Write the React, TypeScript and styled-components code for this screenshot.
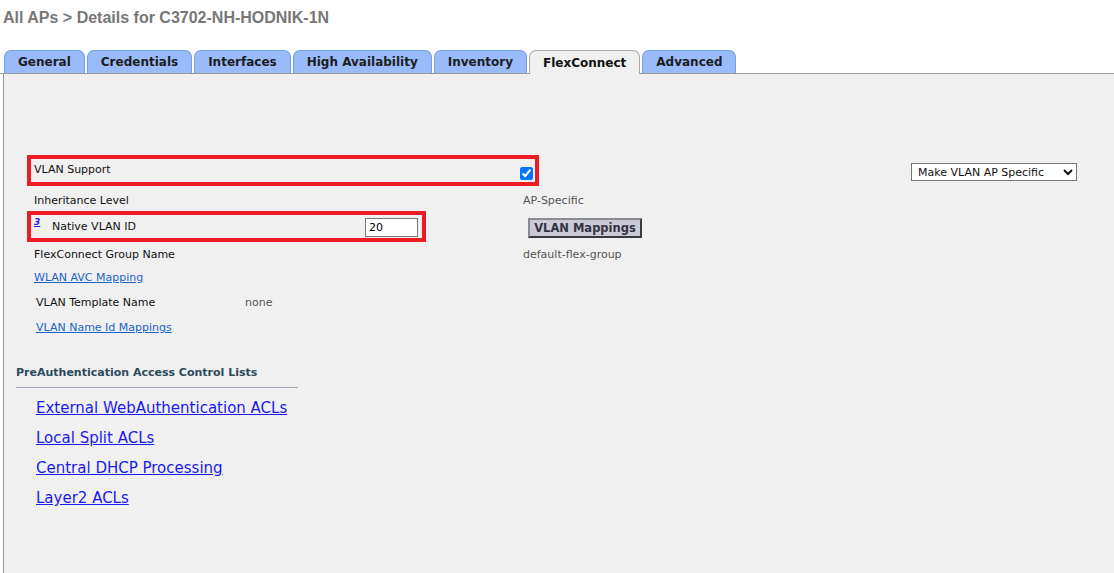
import React from "react";
import styled, { createGlobalStyle } from "styled-components";

const Global = createGlobalStyle`
  html, body { margin: 0; padding: 0; background: #ffffff; }
  body { font-family: "DejaVu Sans", Verdana, sans-serif; }
`;

const Page = styled.div`
  width: 1114px;
  height: 573px;
  display: flex;
  flex-direction: column;
  overflow: hidden;
`;

const Title = styled.h1`
  margin: 0;
  padding: 9px 0 0 3px;
  height: 41px;
  box-sizing: border-box;
  font-family: "Liberation Sans", Arial, sans-serif;
  font-weight: bold;
  font-size: 16px;
  color: #777777;
`;

const TabBar = styled.div`
  display: flex;
  align-items: flex-end;
  gap: 2px;
  padding: 9px 0 0 4px;
  height: 33px;
  box-sizing: border-box;
  border-bottom: 1px solid #999999;
`;

const Tab = styled.div<{ $active?: boolean }>`
  box-sizing: border-box;
  padding: 0 13px;
  display: flex;
  align-items: center;
  border: 1px solid ${(p) => (p.$active ? "#a8a8a8" : "#72a0e4")};
  border-bottom: none;
  border-radius: 7px 7px 0 0;
  background: ${(p) => (p.$active ? "#f0f0f0" : "#99bbfa")};
  font-weight: bold;
  font-size: 12px;
  color: ${(p) => (p.$active ? "#111111" : "#1d1d1d")};
  margin-bottom: ${(p) => (p.$active ? "-1px" : "0")};
  height: ${(p) => (p.$active ? "24px" : "23px")};
`;

const Panel = styled.div`
  flex: 1;
  margin-left: 3px;
  border-left: 1px solid #9a9a9a;
  background: #f0f0f0;
  padding: 81px 0 0 23px;
  display: flex;
  flex-direction: column;
  font-size: 11px;
  color: #111111;
`;

const Line = styled.div<{ $h: number; $shift?: number }>`
  display: flex;
  align-items: center;
  box-sizing: border-box;
  height: ${(p) => p.$h}px;
  padding-top: ${(p) => p.$shift ?? 0}px;
`;

const RedBox = styled.div<{ $w: number }>`
  width: ${(p) => p.$w}px;
  height: 31px;
  box-sizing: border-box;
  border: 4px solid #ed1c24;
  display: flex;
  align-items: center;
  padding: 0 2px 0 3px;
`;

const Label = styled.span<{ $w?: number; $pad?: number; $up?: number }>`
  display: inline-block;
  box-sizing: border-box;
  width: ${(p) => (p.$w ? `${p.$w}px` : "auto")};
  padding-left: ${(p) => p.$pad ?? 0}px;
  margin-bottom: ${(p) => (p.$up ?? 0) * 2}px;
  flex-shrink: 0;
`;

const Value = styled.span`
  color: #555555;
`;

const Check = styled.input`
  margin: 6px 0 0 auto;
  width: 13px;
  height: 13px;
`;

const Select = styled.select`
  margin-left: 372px;
  margin-top: 3px;
  width: 166px;
  height: 18px;
  font-family: "DejaVu Sans", Verdana, sans-serif;
  font-size: 11px;
  background: #ffffff;
  border: 1px solid #767676;
  padding: 0 2px;
  color: #111;
`;

const Sup = styled.a`
  align-self: flex-start;
  margin-top: 2px;
  font-size: 9px;
  font-weight: bold;
  font-style: italic;
  color: #1a1aee;
  text-decoration: underline;
  width: 18px;
`;

const TextInput = styled.input`
  margin-left: auto;
  width: 53px;
  height: 19px;
  box-sizing: border-box;
  border: 1px solid #767676;
  font-family: "DejaVu Sans", Verdana, sans-serif;
  font-size: 11px;
  padding: 0 3px;
  margin-right: 2px;
  margin-top: 2px;
`;

const Button = styled.button`
  margin-left: 102px;
  margin-top: 2px;
  width: 114px;
  height: 20px;
  box-sizing: border-box;
  background: #c9cad3;
  border: 2px solid;
  border-color: #8a8a94 #3a3a44 #3a3a44 #8a8a94;
  font-family: "DejaVu Sans", Verdana, sans-serif;
  font-weight: bold;
  font-size: 11.5px;
  color: #333344;
  padding: 0;
`;

const SmallLink = styled.a<{ $pad: number }>`
  margin-left: ${(p) => p.$pad}px;
  color: #1c63c9;
  text-decoration: underline;
  font-size: 11px;
`;

const Section = styled.div`
  margin: 26px 0 0 -11px;
  width: 282px;
  border-bottom: 1px solid #9aa3b0;
  padding-bottom: 8px;
  font-weight: bold;
  font-size: 11px;
  color: #2b4a5c;
`;

const AclList = styled.div`
  display: flex;
  flex-direction: column;
  padding: 5px 0 0 9px;
`;

const AclLink = styled.a`
  height: 30px;
  display: flex;
  align-items: center;
  font-size: 15px;
  color: #1a1aee;
  text-decoration: underline;
`;

const tabs = [
  "General",
  "Credentials",
  "Interfaces",
  "High Availability",
  "Inventory",
  "FlexConnect",
  "Advanced",
];

const acls = [
  "External WebAuthentication ACLs",
  "Local Split ACLs",
  "Central DHCP Processing",
  "Layer2 ACLs",
];

export default function App() {
  return (
    <Page>
      <Global />
      <Title>All APs &gt; Details for C3702-NH-HODNIK-1N</Title>
      <TabBar>
        {tabs.map((t) => (
          <Tab key={t} $active={t === "FlexConnect"}>
            {t}
          </Tab>
        ))}
      </TabBar>
      <Panel>
        <Line $h={31}>
          <RedBox $w={512}>
            <Label $up={1}>VLAN Support</Label>
            <Check type="checkbox" defaultChecked />
          </RedBox>
          <Select defaultValue="ap">
            <option value="ap">Make VLAN AP Specific</option>
          </Select>
        </Line>
        <Line $h={25} $shift={3}>
          <Label $w={496} $pad={7}>
            Inheritance Level
          </Label>
          <Value>AP-Specific</Value>
        </Line>
        <Line $h={31}>
          <RedBox $w={399}>
            <Sup href="#">3</Sup>
            <Label>Native VLAN ID</Label>
            <TextInput defaultValue="20" />
          </RedBox>
          <Button>VLAN Mappings</Button>
        </Line>
        <Line $h={24} $shift={1}>
          <Label $w={496} $pad={7}>
            FlexConnect Group Name
          </Label>
          <Value>default-flex-group</Value>
        </Line>
        <Line $h={23}>
          <SmallLink href="#" $pad={7}>
            WLAN AVC Mapping
          </SmallLink>
        </Line>
        <Line $h={26} $shift={1}>
          <Label $w={218} $pad={9}>
            VLAN Template Name
          </Label>
          <Value>none</Value>
        </Line>
        <Line $h={25}>
          <SmallLink href="#" $pad={9}>
            VLAN Name Id Mappings
          </SmallLink>
        </Line>
        <Section>PreAuthentication Access Control Lists</Section>
        <AclList>
          {acls.map((a) => (
            <AclLink key={a} href="#">
              {a}
            </AclLink>
          ))}
        </AclList>
      </Panel>
    </Page>
  );
}
